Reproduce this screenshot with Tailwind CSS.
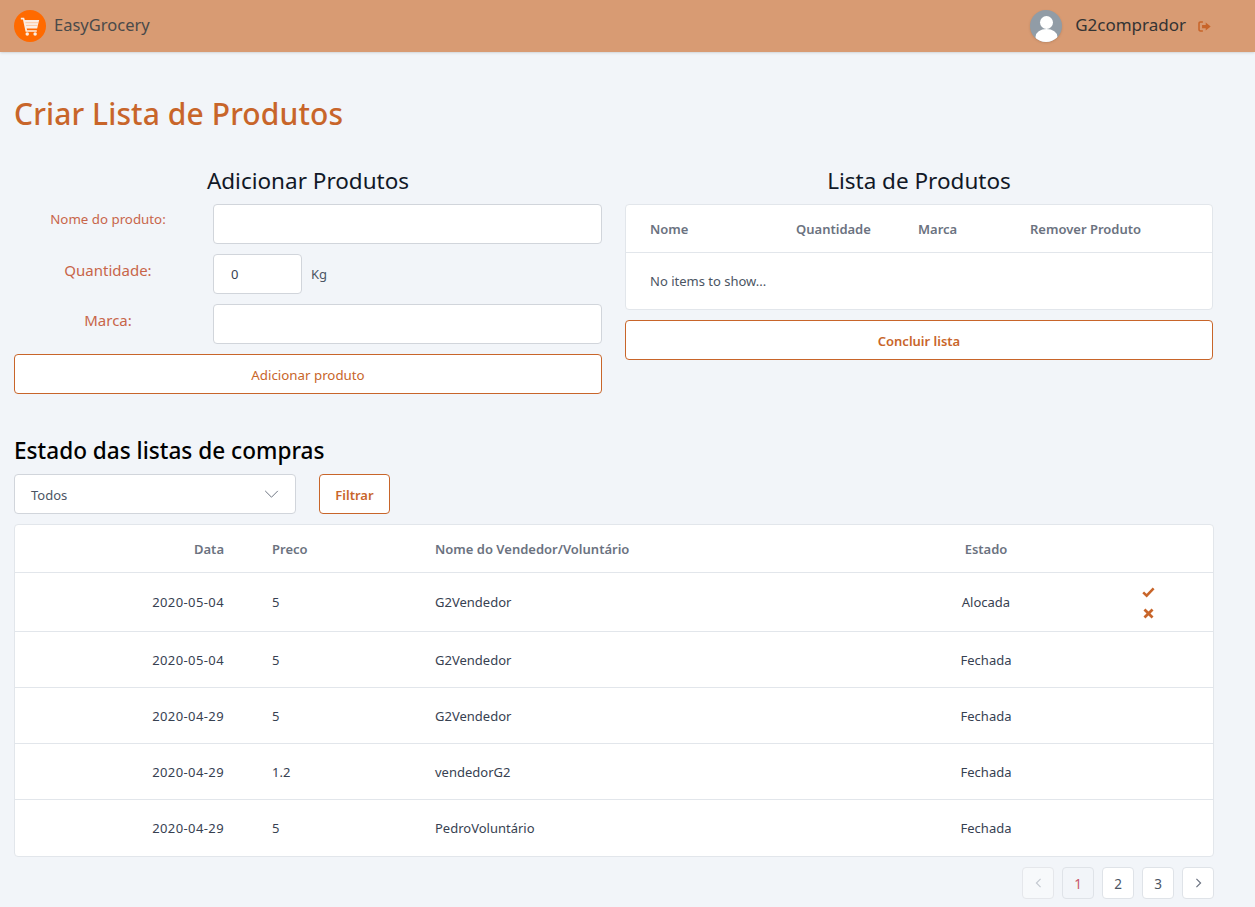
<!DOCTYPE html>
<html lang="pt">

<head>
  <meta charset="UTF-8" />
  <meta name="viewport" content="width=device-width, initial-scale=1.0" />
  <title>EasyGrocery</title>
  <script src="https://cdn.jsdelivr.net/npm/@tailwindcss/browser@4"></script>
</head>

<body class="bg-[#f2f5f9] text-[#4b5563] font-['Noto_Sans','Open_Sans',sans-serif] h-[907px] overflow-hidden">

  <!-- Navbar -->
  <header class="h-[52px] bg-[#d89b73] flex items-center pl-[14px] pr-[44px] shadow-sm">
    <div class="w-8 h-8 rounded-full bg-[#ff6a00] flex items-center justify-center">
      <svg viewBox="0 0 24 24" class="w-[22px] h-[22px] -ml-[1px]" fill="#fbeee4">
        <path d="M2 3h3.6l.7 2.4H22l-2.2 9.2H8.4l.4 1.9h10.6v1.9H7.2L4.3 4.9H2z" />
        <path d="M7 8.4h14M7.7 11.4h12.6" stroke="#ffb27a" stroke-width=".7" />
        <circle cx="9" cy="20.6" r="1.9" />
        <circle cx="17.6" cy="20.6" r="1.9" />
      </svg>
    </div>
    <span class="ml-2 pb-[2px] text-[16.5px] text-[#4a4a4a]">EasyGrocery</span>
    <div class="ml-auto flex items-center">
      <div class="w-8 h-8 rounded-full bg-[#919ca6] overflow-hidden relative shadow-sm">
        <svg viewBox="0 0 32 32" class="w-8 h-8" fill="#fff">
          <circle cx="16.5" cy="12.5" r="6.5" />
          <ellipse cx="16.5" cy="27" rx="11" ry="8" />
        </svg>
      </div>
      <span class="ml-[13px] pb-[2px] text-[17px] text-[#333333]">G2comprador</span>
      <svg viewBox="0 0 16 16" class="w-[13px] h-[13px] ml-[12px]" fill="#c8652a">
        <path d="M6 1.5v1.8H3.2c-.6 0-1 .4-1 1v7.4c0 .6.4 1 1 1H6v1.8H3c-1.6 0-2.7-1.1-2.7-2.7V4.2C.3 2.6 1.4 1.5 3 1.5z" />
        <path d="M9.5 3.2 15.6 8l-6.1 4.8V10H5V6h4.5z" />
      </svg>
    </div>
  </header>

  <main class="pl-[14px] pr-[41px]">
    <h1 class="mt-[41px] h-[42px] leading-[42px] text-[30px] tracking-[0.1px] font-medium text-[#c8652a]">Criar Lista de Produtos</h1>

    <!-- Formulario e lista -->
    <section class="mt-[26px] grid grid-cols-[588px_588px] gap-x-[23px] items-start">
      <div>
        <h2 class="h-[40px] leading-[40px] text-center text-[22.5px] text-[#111827] mb-[3px]">Adicionar Produtos</h2>
        <div class="flex items-start h-[40px]">
          <label class="w-[188px] text-center text-[13.3px] leading-[30px] text-[#c8654a]">Nome do produto:</label>
          <input class="ml-[11px] flex-1 h-[40px] bg-white border border-[#d1d5db] rounded" />
        </div>
        <div class="flex items-start h-[40px] mt-[10px]">
          <label class="w-[188px] text-center text-[15px] leading-[32px] text-[#c8654a]">Quantidade:</label>
          <input value="0" class="ml-[11px] w-[89px] h-[40px] px-[17px] text-[13px] text-[#374151] bg-white border border-[#d1d5db] rounded" />
          <span class="ml-[9px] text-[13px] leading-[40px]">Kg</span>
        </div>
        <div class="flex items-start h-[40px] mt-[10px]">
          <label class="w-[188px] text-center text-[15px] leading-[32px] text-[#c8654a]">Marca:</label>
          <input class="ml-[11px] flex-1 h-[40px] bg-white border border-[#d1d5db] rounded" />
        </div>
        <button class="mt-[10px] w-full h-[40px] pt-[3px] bg-white border border-[#c8652a] rounded text-[13.3px] text-[#c8652a]">Adicionar produto</button>
      </div>

      <div>
        <h2 class="h-[40px] leading-[40px] text-center text-[22.5px] text-[#111827] mb-[3px]">Lista de Produtos</h2>
        <div class="bg-white border border-[#e2e6eb] rounded h-[106px]">
          <div class="h-[48px] pt-[2px] border-b border-[#e2e6eb] grid grid-cols-[146px_122px_112px_1fr] pl-[24px] items-center text-[13px] font-semibold text-[#6b7280]">
            <span>Nome</span>
            <span>Quantidade</span>
            <span>Marca</span>
            <span>Remover Produto</span>
          </div>
          <p class="pl-[24px] pt-[19px] text-[13px] leading-[18px]">No items to show...</p>
        </div>
        <button class="mt-[10px] w-full h-[40px] pt-[3px] bg-white border border-[#c8652a] rounded text-[13px] font-semibold text-[#c8652a]">Concluir lista</button>
      </div>
    </section>

    <!-- Estado das listas -->
    <h2 class="mt-[40px] h-[34px] leading-[34px] text-[22.6px] font-medium text-black">Estado das listas de compras</h2>
    <div class="flex mt-[6px]">
      <div class="w-[282px] h-[40px] pt-[1px] bg-white border border-[#d1d5db] rounded flex items-center justify-between pl-4 pr-[16px] text-[13px]">
        <span class="pt-[2px]">Todos</span>
        <svg viewBox="0 0 16 10" class="w-[15px] h-[9px]" fill="none" stroke="#6b7280" stroke-width="1.1">
          <path d="M1 1l7 7 7-7" />
        </svg>
      </div>
      <button class="ml-[23px] w-[71px] h-[40px] pt-[3px] bg-white border border-[#c8652a] rounded text-[13px] font-semibold text-[#c8652a]">Filtrar</button>
    </div>

    <div class="mt-[10px] w-[1200px] bg-white border border-[#e2e6eb] rounded text-[13px] text-[#374151]">
      <div class="h-[48px] pt-[2px] border-b border-[#e2e6eb] grid grid-cols-[209px_211px_474px_154px_1fr] items-center font-semibold text-[#6b7280]">
        <span class="text-right">Data</span>
        <span class="pl-12">Preco</span>
        <span>Nome do Vendedor/Voluntário</span>
        <span class="text-center">Estado</span>
        <span></span>
      </div>
      <div class="h-[59px] pt-[2px] border-b border-[#e2e6eb] grid grid-cols-[209px_211px_474px_154px_1fr] items-center">
        <span class="text-right tracking-[0.4px]">2020-05-04</span>
        <span class="pl-12">5</span>
        <span>G2Vendedor</span>
        <span class="text-center">Alocada</span>
        <span class="pl-[79px] flex flex-col gap-[10px]">
          <svg viewBox="0 0 14 12" class="w-[13px] h-[11px]" fill="none" stroke="#c8652a" stroke-width="2.8"><path d="M1.2 5.8 5 9.4l7.6-7.8" /></svg>
          <svg viewBox="0 0 12 12" class="w-[11px] h-[11px] ml-[1px]" fill="none" stroke="#c8652a" stroke-width="3"><path d="M1.6 1.6l8.8 8.8M10.4 1.6l-8.8 8.8" /></svg>
        </span>
      </div>
      <div class="h-[56px] pt-[2px] border-b border-[#e2e6eb] grid grid-cols-[209px_211px_474px_154px_1fr] items-center">
        <span class="text-right tracking-[0.4px]">2020-05-04</span>
        <span class="pl-12">5</span>
        <span>G2Vendedor</span>
        <span class="text-center">Fechada</span>
      </div>
      <div class="h-[56px] pt-[2px] border-b border-[#e2e6eb] grid grid-cols-[209px_211px_474px_154px_1fr] items-center">
        <span class="text-right tracking-[0.4px]">2020-04-29</span>
        <span class="pl-12">5</span>
        <span>G2Vendedor</span>
        <span class="text-center">Fechada</span>
      </div>
      <div class="h-[56px] pt-[2px] border-b border-[#e2e6eb] grid grid-cols-[209px_211px_474px_154px_1fr] items-center">
        <span class="text-right tracking-[0.4px]">2020-04-29</span>
        <span class="pl-12">1.2</span>
        <span>vendedorG2</span>
        <span class="text-center">Fechada</span>
      </div>
      <div class="h-[56px] pt-[2px] grid grid-cols-[209px_211px_474px_154px_1fr] items-center">
        <span class="text-right tracking-[0.4px]">2020-04-29</span>
        <span class="pl-12">5</span>
        <span>PedroVoluntário</span>
        <span class="text-center">Fechada</span>
      </div>
    </div>

    <!-- Paginacao -->
    <nav class="w-[1200px] mt-[10px] flex justify-end gap-2 text-[13.5px] text-[#4b5563]">
      <span class="w-8 h-8 rounded border border-[#e5e7eb] bg-[#f7f9fb] flex items-center justify-center">
        <svg viewBox="0 0 8 12" class="w-[7px] h-[10px]" fill="none" stroke="#c4c9d0" stroke-width="1.4"><path d="M6.5 1 1.5 6l5 5" /></svg>
      </span>
      <span class="w-8 h-8 pt-[2px] rounded border border-[#dfe3e8] bg-[#f2f5f9] flex items-center justify-center text-[#c8556a]">1</span>
      <span class="w-8 h-8 pt-[2px] rounded border border-[#dfe3e8] bg-white flex items-center justify-center">2</span>
      <span class="w-8 h-8 pt-[2px] rounded border border-[#dfe3e8] bg-white flex items-center justify-center">3</span>
      <span class="w-8 h-8 rounded border border-[#dfe3e8] bg-white flex items-center justify-center">
        <svg viewBox="0 0 8 12" class="w-[7px] h-[10px]" fill="none" stroke="#6b7280" stroke-width="1.4"><path d="M1.5 1l5 5-5 5" /></svg>
      </span>
    </nav>
  </main>

</body>

</html>
